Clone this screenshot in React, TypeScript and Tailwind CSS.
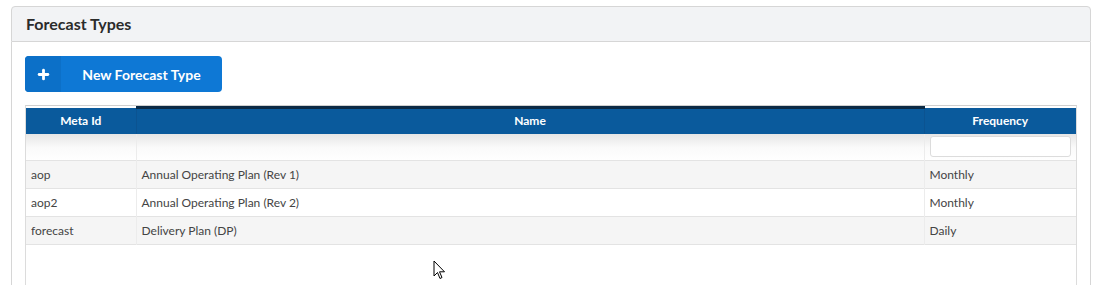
import { Plus } from "lucide-react";

interface ForecastRow {
  metaId: string;
  name: string;
  frequency: string;
}

const rows: ForecastRow[] = [
  { metaId: "aop", name: "Annual Operating Plan (Rev 1)", frequency: "Monthly" },
  { metaId: "aop2", name: "Annual Operating Plan (Rev 2)", frequency: "Monthly" },
  { metaId: "forecast", name: "Delivery Plan (DP)", frequency: "Daily" },
];

export default function App() {
  return (
    <div className="relative h-[285px] overflow-hidden bg-white pl-[11px] pr-[6px] pt-[6px] font-['Lato','Liberation_Sans',sans-serif]">
      {/* Panel header */}
      <div className="flex h-[36px] items-center rounded-t-[4px] border border-[#d6d6d6] bg-[#f2f3f5] px-[14px]">
        <h1 className="text-[16px] font-bold text-[#2b2b2b]">Forecast Types</h1>
      </div>

      {/* Panel body */}
      <div className="h-[260px] border-x border-[#d6d6d6] px-[13px] pt-[14px]">
        <button className="flex h-[36px] w-[197px] items-center overflow-hidden rounded-[4px] bg-[#0e78d5] text-white">
          <span className="flex h-full w-[36px] items-center justify-center bg-[#0c70c8]">
            <Plus size={15} strokeWidth={4.5} />
          </span>
          <span className="flex-1 text-center text-[14px] font-bold">New Forecast Type</span>
        </button>

        <div className="mt-[13px] h-[200px] border border-[#dcdcdc] border-t-[#cfcfcf]">
          <table className="w-full table-fixed border-collapse text-[12px]">
            <colgroup>
              <col className="w-[110px]" />
              <col />
              <col className="w-[152px]" />
            </colgroup>
            <thead>
              <tr className="h-[26px] bg-[#0a5a9c] text-white">
                <th className="border-r border-[#0b5391] font-bold">Meta Id</th>
                <th className="border-r border-t-[3px] border-[#0b5391] border-t-[#0b2a45] font-bold">Name</th>
                <th className="font-bold">Frequency</th>
              </tr>
            </thead>
            <tbody>
              <tr className="h-[27px] bg-gradient-to-b from-[#e6e6e6] via-[#fafafa] to-white">
                <td className="border-r border-[#ececec]" />
                <td className="border-r border-[#ececec]" />
                <td className="px-[5px]">
                  <input className="h-[21px] w-full rounded-[3px] border border-[#dcdcdc] bg-white outline-none" />
                </td>
              </tr>
              {rows.map((row, i) => (
                <tr
                  key={row.metaId}
                  className={`h-[28px] border-t border-[#e3e3e3] text-[#444] ${i % 2 === 0 ? "bg-[#f5f5f5]" : "bg-white"}`}
                >
                  <td className="border-r border-[#ececec] px-[5px]">{row.metaId}</td>
                  <td className="border-r border-[#ececec] px-[5px]">{row.name}</td>
                  <td className="px-[5px]">{row.frequency}</td>
                </tr>
              ))}
              <tr className="border-t border-[#e3e3e3]">
                <td colSpan={3} />
              </tr>
            </tbody>
          </table>
        </div>
      </div>

      {/* mouse pointer */}
      <svg className="absolute left-[433px] top-[260px]" width="13" height="20" viewBox="0 0 13 20">
        <path d="M1 1 L1 16 L4.5 12.5 L7 18.5 L9 17.5 L6.5 11.8 L11.5 11.8 Z" fill="white" stroke="black" strokeWidth="1" strokeLinejoin="round" />
      </svg>
    </div>
  );
}
